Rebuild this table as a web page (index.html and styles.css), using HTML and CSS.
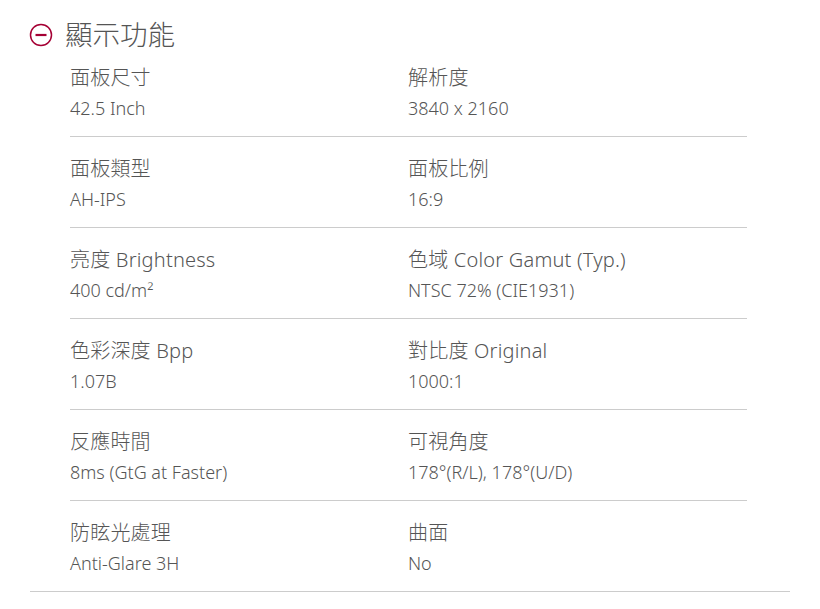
FILE: index.html
```html
<!DOCTYPE html>
<html lang="zh-Hant">
<head>
<meta charset="utf-8">
<link rel="stylesheet" href="styles.css">
</head>
<body>
<section class="spec-section">
  <div class="spec-header">
    <svg class="toggle-icon" width="24" height="24" viewBox="0 0 24 24">
      <circle cx="12" cy="12" r="10.5" fill="none" stroke="#a50034" stroke-width="1.5"/>
      <line x1="6.5" y1="12" x2="17.5" y2="12" stroke="#a50034" stroke-width="2.2"/>
    </svg>
    <h2 class="spec-title">顯示功能</h2>
  </div>
  <div class="spec-list">
    <div class="spec-row">
      <div class="spec-item"><div class="spec-label">面板尺寸</div><div class="spec-value">42.5 Inch</div></div>
      <div class="spec-item"><div class="spec-label">解析度</div><div class="spec-value">3840 x 2160</div></div>
    </div>
    <div class="spec-row">
      <div class="spec-item"><div class="spec-label">面板類型</div><div class="spec-value">AH-IPS</div></div>
      <div class="spec-item"><div class="spec-label">面板比例</div><div class="spec-value">16:9</div></div>
    </div>
    <div class="spec-row">
      <div class="spec-item"><div class="spec-label">亮度 Brightness</div><div class="spec-value">400 cd/m²</div></div>
      <div class="spec-item"><div class="spec-label">色域 Color Gamut (Typ.)</div><div class="spec-value">NTSC 72% (CIE1931)</div></div>
    </div>
    <div class="spec-row">
      <div class="spec-item"><div class="spec-label">色彩深度 Bpp</div><div class="spec-value">1.07B</div></div>
      <div class="spec-item"><div class="spec-label">對比度 Original</div><div class="spec-value">1000:1</div></div>
    </div>
    <div class="spec-row">
      <div class="spec-item"><div class="spec-label">反應時間</div><div class="spec-value">8ms (GtG at Faster)</div></div>
      <div class="spec-item"><div class="spec-label">可視角度</div><div class="spec-value">178°(R/L), 178°(U/D)</div></div>
    </div>
    <div class="spec-row">
      <div class="spec-item"><div class="spec-label">防眩光處理</div><div class="spec-value">Anti-Glare 3H</div></div>
      <div class="spec-item"><div class="spec-label">曲面</div><div class="spec-value">No</div></div>
    </div>
  </div>
</section>
</body>
</html>
```

FILE: styles.css
```css
html, body {
  margin: 0;
  padding: 0;
  background: #fff;
}
body {
  font-family: "Noto Sans", "Noto Sans CJK TC", sans-serif;
  font-weight: 300;
  color: #555;
}
.spec-section {
  margin-left: 30px;
  width: 760px;
  border-bottom: 1px solid #cccccc;
}
.spec-header {
  display: flex;
  align-items: center;
  height: 48px;
  margin-top: 11px;
}
.toggle-icon {
  display: block;
  margin-left: -1px;
}
.spec-title {
  margin: 0 0 0 12px;
  font-size: 27.5px;
  font-weight: 300;
  color: #555;
  line-height: 48px;
}
.spec-list {
  margin-left: 40px;
  width: 677px;
}
.spec-row {
  display: grid;
  grid-template-columns: 338px 1fr;
  padding: 17px 0 13px;
  border-bottom: 1px solid #cccccc;
}
.spec-row:first-child {
  padding-top: 4px;
}
.spec-row:last-child {
  border-bottom: none;
}
.spec-label {
  font-size: 20px;
  line-height: 30px;
  letter-spacing: 0.2px;
  color: #555;
}
.spec-value {
  font-size: 18px;
  line-height: 30px;
  color: #555;
}
```
